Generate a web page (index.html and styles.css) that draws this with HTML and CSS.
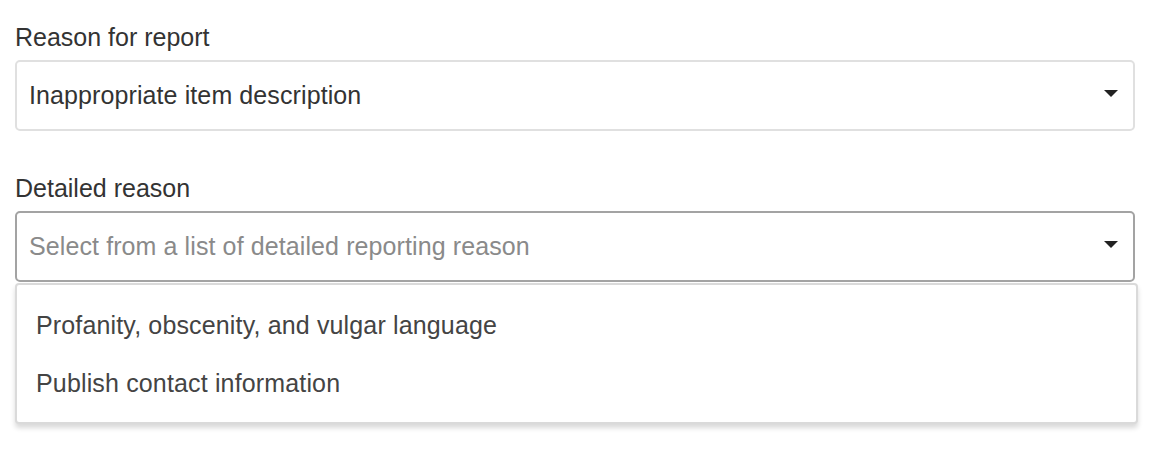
FILE: index.html
```html
<!DOCTYPE html>
<html lang="en">
<head>
    <meta charset="UTF-8">
    <meta name="viewport" content="width=device-width, initial-scale=1.0">
    <title>Report item</title>
    <link rel="stylesheet" href="styles.css">
</head>
<body>

    <div class="report-form">
        <div class="field">
            <label class="field-label">Reason for report</label>
            <div class="select-box">
                <span class="select-value">Inappropriate item description</span>
                <span class="caret"></span>
            </div>
        </div>

        <div class="field">
            <label class="field-label">Detailed reason</label>
            <div class="select-box open">
                <span class="select-value placeholder">Select from a list of detailed reporting reason</span>
                <span class="caret"></span>
            </div>
            <ul class="dropdown-menu">
                <li>Profanity, obscenity, and vulgar language</li>
                <li>Publish contact information</li>
            </ul>
        </div>
    </div>

</body>
</html>
```

FILE: styles.css
```css
body {
    font-family: 'Liberation Sans', Arial, sans-serif;
    background-color: #ffffff;
    color: #333;
    margin: 0;
    padding: 0;
}

.report-form {
    padding: 23px 15px 0 15px;
}

.field {
    margin-bottom: 43px;
}

.field-label {
    display: block;
    font-size: 25px;
    line-height: 28px;
    color: #333;
    margin-bottom: 9px;
}

.select-box {
    display: flex;
    align-items: center;
    justify-content: space-between;
    height: 71px;
    box-sizing: border-box;
    border: 2px solid #e0e0e0;
    border-radius: 5px;
    padding: 0 15px 0 12px;
}

.select-box.open {
    border-color: #a3a3a3;
}

.select-value {
    font-size: 25px;
    letter-spacing: 0.1px;
    color: #333;
}

.select-value.placeholder {
    color: #8a8a8a;
}

.caret {
    width: 0;
    height: 0;
    border-left: 7px solid transparent;
    border-right: 7px solid transparent;
    border-top: 7px solid #222;
    margin-top: -5px;
}

.dropdown-menu {
    list-style: none;
    margin: 1px 0 0 0;
    padding: 11px 0 10px 0;
    width: calc(100% + 3px);
    box-sizing: border-box;
    border: 2px solid #dadada;
    border-radius: 4px;
    box-shadow: 0 4px 5px rgba(0, 0, 0, 0.15);
    background-color: #ffffff;
}

.dropdown-menu li {
    height: 58px;
    line-height: 58px;
    padding-left: 19px;
    font-size: 25px;
    letter-spacing: 0.15px;
    color: #444;
}
```
